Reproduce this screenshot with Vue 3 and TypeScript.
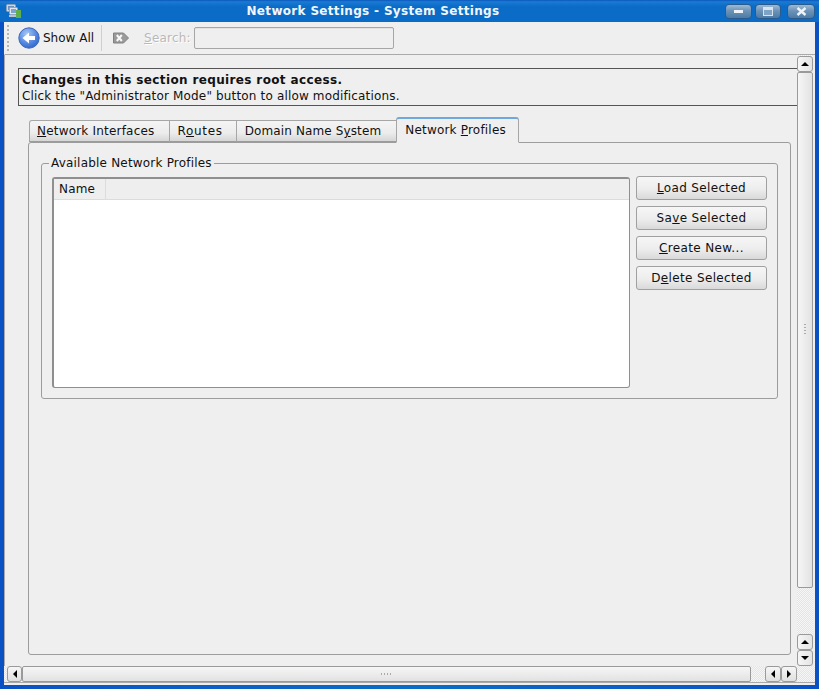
<script setup lang="ts">
interface Tab { pre: string; key: string; post: string; active?: boolean }
const tabs: Tab[] = [
  { pre: '', key: 'N', post: 'etwork Interfaces' },
  { pre: 'R', key: 'o', post: 'utes' },
  { pre: 'Domain Name S', key: 'y', post: 'stem' },
  { pre: 'Network ', key: 'P', post: 'rofiles', active: true },
]
const buttons = [
  { pre: '', key: 'L', post: 'oad Selected' },
  { pre: 'Sa', key: 'v', post: 'e Selected' },
  { pre: '', key: 'C', post: 'reate New...' },
  { pre: 'D', key: 'e', post: 'lete Selected' },
]
</script>

<template>
  <div class="window">
    <header class="titlebar">
      <svg class="appicon" width="15" height="14" viewBox="0 0 15 14">
        <rect x="0.5" y="0.5" width="9" height="7" rx="1" fill="#c9d6e6" stroke="#8fa0b5" />
        <rect x="2" y="2" width="6" height="4" fill="#6a8fc0" />
        <rect x="3.5" y="3.5" width="8" height="7" rx="1" fill="#dfe6ee" stroke="#98a5b5" />
        <rect x="5" y="5" width="5" height="4" fill="#7da4cf" />
        <rect x="10" y="6" width="5" height="8" fill="#5fb04a" />
        <rect x="3" y="11" width="7" height="2" fill="#b8c4d2" />
      </svg>
      <span class="title">Network Settings - System Settings</span>
      <div class="winbtns">
        <span class="winbtn"><i class="min"></i></span>
        <span class="winbtn mid"><i class="max"></i></span>
        <span class="winbtn close">
          <svg width="11" height="9" viewBox="0 0 11 9"><path d="M1.5 1 L9.5 8 M9.5 1 L1.5 8" stroke="#eef3f8" stroke-width="2.4" /></svg>
        </span>
      </div>
    </header>

    <div class="client">
      <div class="toolbar">
        <span class="grip"></span>
        <svg class="back" width="22" height="22" viewBox="0 0 22 22">
          <defs>
            <radialGradient id="bk" cx="0.4" cy="0.3" r="0.8">
              <stop offset="0" stop-color="#a9c8f5" />
              <stop offset="0.6" stop-color="#4f86e0" />
              <stop offset="1" stop-color="#2a5cc0" />
            </radialGradient>
          </defs>
          <circle cx="11" cy="11" r="10.2" fill="url(#bk)" stroke="#3a68bd" />
          <path d="M4.5 11 L11 5.5 V9 H17 V13 H11 V16.5 Z" fill="#fff" />
        </svg>
        <span class="showall">Show All</span>
        <span class="tsep"></span>
        <svg class="clear" width="16" height="12" viewBox="0 0 16 12">
          <path d="M0.5 1 H10.5 L15.5 6 L10.5 11 H0.5 Z" fill="#9a9a9a" stroke="#808080" />
          <path d="M3.8 3 L8.8 9 M8.8 3 L3.8 9" stroke="#f8f8f8" stroke-width="2" />
        </svg>
        <span class="searchlbl"><u>S</u>earch:</span>
        <span class="searchbox"></span>
      </div>

      <div class="scrollarea">
        <div class="viewport">
          <div class="banner">
            <div class="bold">Changes in this section requires root access.</div>
            <div class="sub">Click the "Administrator Mode" button to allow modifications.</div>
          </div>

          <div class="tabwidget">
            <div class="tabbar">
              <div v-for="t in tabs" :key="t.post" class="tab" :class="{ active: t.active }">
                {{ t.pre }}<u>{{ t.key }}</u>{{ t.post }}
              </div>
            </div>
            <div class="panel">
              <fieldset class="group">
                <legend>Available Network Profiles</legend>
                <div class="grouprow">
                  <div class="tree">
                    <div class="thead">
                      <span class="th">Name</span>
                    </div>
                  </div>
                  <div class="buttons">
                    <button v-for="b in buttons" :key="b.post" class="btn" type="button">
                      {{ b.pre }}<u>{{ b.key }}</u>{{ b.post }}
                    </button>
                  </div>
                </div>
              </fieldset>
            </div>
          </div>
        </div>

        <div class="vscroll">
          <span class="sbtn single"><i class="tri up"></i></span>
          <div class="vslider"><span class="vgrip"></span></div>
          <div class="vpair">
            <span class="sbtn"><i class="tri up"></i></span>
            <span class="sbtn"><i class="tri down"></i></span>
          </div>
        </div>
      </div>

      <div class="hscroll">
        <span class="hbtn first"><i class="tri left"></i></span>
        <div class="hslider"><span class="hgrip"></span></div>
        <div class="hpair">
          <span class="hbtn"><i class="tri left"></i></span>
          <span class="hbtn"><i class="tri right"></i></span>
        </div>
      </div>
    </div>
  </div>
</template>

<style>
html, body { margin: 0; padding: 0; }
</style>

<style scoped>
.window {
  width: 819px;
  height: 689px;
  box-sizing: border-box;
  padding: 0 4px 4px;
  display: flex;
  flex-direction: column;
  background: linear-gradient(90deg, #0a52c4 0, #0a6cc8 50%, #0a52c4 100%);
  font: 12px/16px "DejaVu Sans", sans-serif;
  letter-spacing: 0.2px;
  color: #111;
  overflow: hidden;
}
.titlebar {
  height: 22px;
  flex: none;
  margin: 0 -4px;
  padding: 0 4px 0 6px;
  display: flex;
  align-items: center;
  position: relative;
  background: linear-gradient(180deg, #0a58bc 0, #1a7ad4 8%, #0a6cc6 30%, #0a6cc6 100%);
}
.appicon { flex: none; }
.title {
  position: absolute;
  left: -73px;
  right: 0;
  top: 3px;
  text-align: center;
  color: #f2f6fa;
  font-weight: 700;
  font-size: 12px;
  letter-spacing: 0.32px;
}
.winbtns {
  margin-left: auto;
  margin-top: 1px;
  display: flex;
  gap: 3px;
  position: relative;
}
.winbtn {
  width: 27px;
  height: 15px;
  box-sizing: border-box;
  border: 1px solid #2a5b8e;
  border-radius: 4px;
  background: linear-gradient(180deg, #9fbad2 0, #6b93b8 45%, #4d7ba6 100%);
  display: flex;
  align-items: center;
  justify-content: center;
}
.winbtn.mid { width: 26px; }
.winbtn.close { margin-left: 3px; width: 28px; }
.min { display: block; width: 9px; height: 3px; background: #eef3f8; }
.max {
  display: block;
  width: 8px;
  height: 5px;
  border: 1px solid #d7e3ee;
  border-top-width: 3px;
  background: #7fa3c4;
}
.client {
  flex: 1;
  min-height: 0;
  display: flex;
  flex-direction: column;
  background: #efefef;
}
.toolbar {
  height: 33px;
  flex: none;
  box-sizing: border-box;
  display: flex;
  align-items: center;
  border-bottom: 1px solid #a9a9a9;
  border-left: 1px solid #efefef;
}
.grip {
  width: 2px;
  height: 26px;
  margin-left: 2px;
  background: repeating-linear-gradient(180deg, #b5b5b5 0 2px, transparent 2px 4px);
}
.back { margin-left: 9px; flex: none; }
.showall { margin-left: 3px; letter-spacing: 0; }
.tsep {
  width: 1px;
  height: 26px;
  margin-left: 7px;
  background: #cfcfcf;
}
.clear { margin-left: 11px; flex: none; }
.searchlbl {
  margin-left: 15px;
  color: #b9b9b9;
  text-shadow: 1px 1px 0 #fff;
  width: 47px;
  flex: none;
}
.searchbox {
  width: 198px;
  height: 20px;
  margin-left: 3px;
  border: 1px solid #a6a6a6;
  border-radius: 2px;
  background: #efefef;
  box-shadow: inset 0 1px 0 #e2e2e2;
}
.scrollarea {
  flex: 1;
  min-height: 0;
  display: flex;
  border-left: 1px solid #a9a9a9;
}
.viewport {
  flex: 1;
  min-width: 0;
  box-sizing: border-box;
  padding: 13px 0 0 13px;
  display: flex;
  flex-direction: column;
}
.banner {
  height: 38px;
  flex: none;
  box-sizing: border-box;
  border: 1px solid #555;
  border-right: 0;
  padding: 3px 0 0 3px;
  line-height: 16px;
}
.bold { font-weight: 700; letter-spacing: 0.36px; }
.sub { letter-spacing: 0.16px; }
.tabwidget {
  flex: 1;
  min-height: 0;
  padding: 10px 6px 11px 10px;
  display: flex;
  flex-direction: column;
}
.tabbar {
  display: flex;
  align-items: flex-end;
  height: 26px;
  padding-left: 1px;
  flex: none;
  position: relative;
  z-index: 1;
}
.tab {
  height: 22px;
  box-sizing: border-box;
  padding: 2px 14px 0 8px;
  letter-spacing: 0.2px;
  white-space: pre;
  border: 1px solid #a6a6a6;
  border-left: 0;
  border-bottom: 1px solid #9c9c9c;
  background: linear-gradient(180deg, #f4f4f4 0, #ececec 60%, #d6d6d6 100%);
}
.tab:first-child {
  border-left: 1px solid #a6a6a6;
  border-top-left-radius: 3px;
  padding-left: 7px;
  padding-right: 14px;
}
.tab:nth-child(2) { padding-right: 13px; letter-spacing: 0.68px; }
.tab:nth-child(3) { letter-spacing: 0.12px; padding-right: 15px; }
.tab.active {
  height: 26px;
  padding: 3px 12px 0 8px;
  background: #efefef;
  border-left: 1px solid #a6a6a6;
  border-top: 2px solid #6fa8dc;
  border-bottom: 1px solid #efefef;
  border-radius: 3px 3px 0 0;
  margin-left: -1px;
  margin-bottom: -1px;
}
.panel {
  flex: 1;
  min-height: 0;
  box-sizing: border-box;
  border: 1px solid #9c9c9c;
  border-radius: 3px;
  padding: 12px;
}
.group {
  margin: 1px 0 0;
  min-width: 0;
  height: 243px;
  box-sizing: border-box;
  border: 1px solid #9c9c9c;
  border-radius: 3px;
  padding: 7px 10px 10px 10px;
}
.group legend { padding: 0 2px; margin-left: -3px; line-height: 14px; }
.grouprow {
  display: flex;
  gap: 6px;
  height: 211px;
}
.tree {
  flex: 1;
  min-width: 0;
  box-sizing: border-box;
  border: 1px solid #8f8f8f;
  border-top-width: 2px;
  border-left-width: 2px;
  border-radius: 3px;
  background: #fff;
  overflow: hidden;
}
.thead {
  height: 21px;
  box-sizing: border-box;
  display: flex;
  background: #eeeeee;
  border-bottom: 1px solid #dcdcdc;
}
.th {
  width: 52px;
  box-sizing: border-box;
  padding: 2px 0 0 5px;
  border-right: 1px solid #dcdcdc;
}
.buttons {
  flex: none;
  width: 131px;
  display: flex;
  flex-direction: column;
  gap: 6px;
  margin-top: -1px;
}
.btn {
  width: 131px;
  height: 24px;
  padding: 0;
  font: inherit;
  letter-spacing: 0.35px;
  color: #111;
  white-space: pre;
  border: 1px solid #a0a0a0;
  border-radius: 3px;
  background: linear-gradient(180deg, #f6f6f6 0, #ededed 55%, #d9d9d9 100%);
}
.vscroll {
  width: 16px;
  flex: none;
  display: flex;
  flex-direction: column;
  margin-right: 2px;
  padding-top: 1px;
  background: repeating-conic-gradient(#e4e4e4 0 25%, #f6f6f6 0 50%) 0 0 / 2px 2px;
}
.sbtn {
  width: 16px;
  height: 16px;
  box-sizing: border-box;
  display: flex;
  align-items: center;
  justify-content: center;
  border: 1px solid #9a9a9a;
  border-radius: 3px;
  background: linear-gradient(90deg, #f6f6f6, #e4e4e4);
}
.vslider {
  height: 516px;
  width: 16px;
  box-sizing: border-box;
  border: 1px solid #9a9a9a;
  border-radius: 2px;
  background: linear-gradient(90deg, #f6f6f6, #e2e2e2);
  display: flex;
  align-items: center;
  justify-content: center;
}
.vgrip {
  width: 2px;
  height: 12px;
  background: repeating-linear-gradient(180deg, #aaa 0 1px, transparent 1px 3px);
}
.vpair { margin-top: auto; display: flex; flex-direction: column; }
.hscroll {
  height: 17px;
  box-sizing: border-box;
  flex: none;
  display: flex;
  padding-left: 3px;
  margin-bottom: 2px;
  border-bottom: 1px solid #a9a9a9;
  background: repeating-conic-gradient(#e4e4e4 0 25%, #f6f6f6 0 50%) 0 0 / 2px 2px;
}
.hbtn {
  width: 16px;
  height: 16px;
  box-sizing: border-box;
  display: flex;
  align-items: center;
  justify-content: center;
  border: 1px solid #9a9a9a;
  border-radius: 3px;
  background: linear-gradient(180deg, #f6f6f6, #e0e0e0);
}
.hbtn.first { width: 15px; }
.hslider {
  width: 729px;
  height: 16px;
  box-sizing: border-box;
  border: 1px solid #9a9a9a;
  border-radius: 2px;
  background: linear-gradient(180deg, #f6f6f6, #e2e2e2);
  display: flex;
  align-items: center;
  justify-content: center;
}
.hgrip {
  width: 12px;
  height: 2px;
  background: repeating-linear-gradient(90deg, #aaa 0 1px, transparent 1px 3px);
}
.hpair { margin-left: auto; margin-right: 18px; display: flex; }
.tri { display: block; width: 0; height: 0; border: 4px solid transparent; }
.tri.up { border-top: 0; border-bottom-color: #000; }
.tri.down { border-bottom: 0; border-top-color: #000; }
.tri.left { border-left: 0; border-right-color: #000; }
.tri.right { border-right: 0; border-left-color: #000; }
</style>
